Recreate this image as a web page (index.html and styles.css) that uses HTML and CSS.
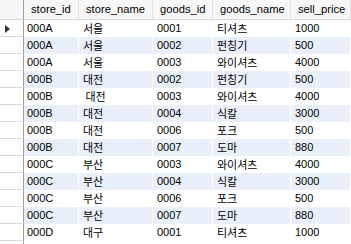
FILE: index.html
```html
<!DOCTYPE html>
<html>
<head>
<meta charset="utf-8">
<link rel="stylesheet" href="styles.css">
</head>
<body>
<div class="grid">
  <div class="row head">
    <div class="gut"></div>
    <div class="c c1">store_id</div>
    <div class="c c2">store_name</div>
    <div class="c c3">goods_id</div>
    <div class="c c4">goods_name</div>
    <div class="c c5">sell_price</div>
  </div>
  <div class="row"><div class="gut"><span class="arrow"></span></div><div class="c c1">000A</div><div class="c c2 ko">서울</div><div class="c c3">0001</div><div class="c c4 ko">티셔츠</div><div class="c c5">1000</div></div>
  <div class="row alt"><div class="gut"></div><div class="c c1">000A</div><div class="c c2 ko">서울</div><div class="c c3">0002</div><div class="c c4 ko">펀칭기</div><div class="c c5">500</div></div>
  <div class="row"><div class="gut"></div><div class="c c1">000A</div><div class="c c2 ko">서울</div><div class="c c3">0003</div><div class="c c4 ko">와이셔츠</div><div class="c c5">4000</div></div>
  <div class="row alt"><div class="gut"></div><div class="c c1">000B</div><div class="c c2 ko">대전</div><div class="c c3">0002</div><div class="c c4 ko">펀칭기</div><div class="c c5">500</div></div>
  <div class="row"><div class="gut"></div><div class="c c1">000B</div><div class="c c2 ko"> 대전</div><div class="c c3">0003</div><div class="c c4 ko">와이셔츠</div><div class="c c5">4000</div></div>
  <div class="row alt"><div class="gut"></div><div class="c c1">000B</div><div class="c c2 ko">대전</div><div class="c c3">0004</div><div class="c c4 ko">식칼</div><div class="c c5">3000</div></div>
  <div class="row"><div class="gut"></div><div class="c c1">000B</div><div class="c c2 ko">대전</div><div class="c c3">0006</div><div class="c c4 ko">포크</div><div class="c c5">500</div></div>
  <div class="row alt"><div class="gut"></div><div class="c c1">000B</div><div class="c c2 ko">대전</div><div class="c c3">0007</div><div class="c c4 ko">도마</div><div class="c c5">880</div></div>
  <div class="row"><div class="gut"></div><div class="c c1">000C</div><div class="c c2 ko">부산</div><div class="c c3">0003</div><div class="c c4 ko">와이셔츠</div><div class="c c5">4000</div></div>
  <div class="row alt"><div class="gut"></div><div class="c c1">000C</div><div class="c c2 ko">부산</div><div class="c c3">0004</div><div class="c c4 ko">식칼</div><div class="c c5">3000</div></div>
  <div class="row"><div class="gut"></div><div class="c c1">000C</div><div class="c c2 ko">부산</div><div class="c c3">0006</div><div class="c c4 ko">포크</div><div class="c c5">500</div></div>
  <div class="row alt"><div class="gut"></div><div class="c c1">000C</div><div class="c c2 ko">부산</div><div class="c c3">0007</div><div class="c c4 ko">도마</div><div class="c c5">880</div></div>
  <div class="row"><div class="gut"></div><div class="c c1">000D</div><div class="c c2 ko">대구</div><div class="c c3">0001</div><div class="c c4 ko">티셔츠</div><div class="c c5">1000</div></div>
  <div class="row filler"><div class="gut"></div></div>
</div>
</body>
</html>
```

FILE: styles.css
```css
html, body {
  margin: 0;
  padding: 0;
  background: #fff;
}
body {
  width: 351px;
  height: 244px;
  overflow: hidden;
  font-family: "Liberation Sans", "Noto Sans CJK KR", sans-serif;
  font-size: 11px;
  color: #000;
}
.grid {
  display: flex;
  flex-direction: column;
}
.row {
  display: grid;
  grid-template-columns: 24px 55px 74px 60px 78px 60px;
  height: 17px;
  line-height: 17px;
  background: #fff;
}
.row.alt {
  background: #e9f0fa;
}
.row.head {
  height: 20px;
  line-height: 19px;
  background: #f7f7f7;
  border-bottom: 0;
}
.row.filler {
  height: 10px;
}
.gut {
  box-sizing: border-box;
  border-right: 1px solid #a0a0a0;
  border-bottom: 1px solid #dadada;
  background: #fff;
  position: relative;
}
.row.head .gut {
  background: #f7f7f7;
  border-bottom: 1px solid #dadada;
}
.row.filler .gut {
  border-bottom: 0;
}
.c {
  box-sizing: border-box;
  border-right: 1px solid #fff;
  padding-left: 4px;
  white-space: pre;
  overflow: hidden;
}
.c.c1 {
  padding-left: 3px;
}
.row.head .c {
  padding-left: 7px;
  border-right: 1px solid #e2e2e2;
  border-bottom: 1px solid #dadada;
  font-size: 11.2px;
}
.ko {
  font-family: "Noto Sans CJK KR", sans-serif;
  font-size: 11px;
}
.arrow {
  position: absolute;
  left: 5px;
  top: 5px;
  width: 0;
  height: 0;
  border-top: 4px solid transparent;
  border-bottom: 4px solid transparent;
  border-left: 5px solid #333;
}
```
